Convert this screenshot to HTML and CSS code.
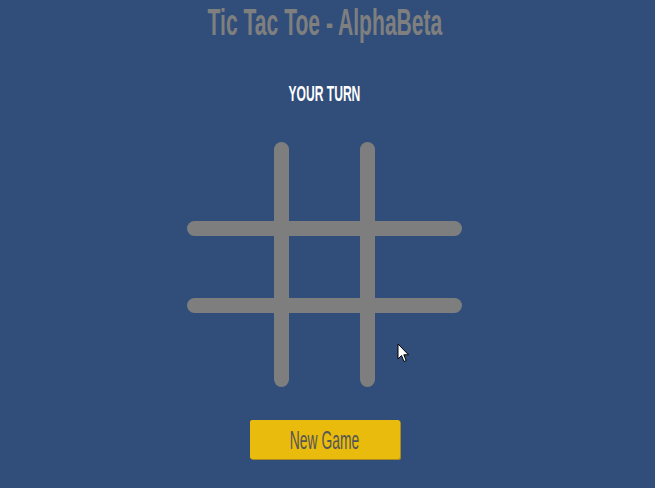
FILE: index.html
```html
<!DOCTYPE html>
<html>
<head>
<meta charset="utf-8">
<link rel="stylesheet" href="styles.css">
</head>
<body>
<div class="app">
  <h1 class="title">Tic Tac Toe - AlphaBeta</h1>
  <div class="status">YOUR TURN</div>
  <div class="board">
    <div class="line vline v1"></div>
    <div class="line vline v2"></div>
    <div class="line hline h1"></div>
    <div class="line hline h2"></div>
  </div>
  <button class="new-game"><span class="label">New Game</span></button>
</div>
<svg class="cursor" width="14" height="22" viewBox="0 0 14 22">
  <path d="M1 1 L1 16 L4.5 12.5 L7 18.5 L9.2 17.6 L6.8 11.8 L11.5 11.8 Z" fill="#fff" stroke="#000" stroke-width="1" stroke-linejoin="miter"/>
</svg>
</body>
</html>
```
FILE: styles.css
```css
html, body {
  margin: 0;
  padding: 0;
  width: 655px;
  height: 488px;
  overflow: hidden;
  background: #314e7a;
}
.app {
  display: flex;
  flex-direction: column;
  align-items: center;
  padding-top: 3px;
  padding-right: 6px;
}
.title {
  margin: 0;
  font-family: "Liberation Sans", Arial, sans-serif;
  font-weight: bold;
  font-size: 37px;
  line-height: 40px;
  color: #7f7f7f;
  white-space: nowrap;
  transform: scaleX(0.57);
}
.status {
  margin-top: 38px;
  font-family: "Liberation Sans", Arial, sans-serif;
  font-weight: bold;
  font-size: 22px;
  line-height: 26px;
  color: #ffffff;
  white-space: nowrap;
  transform: scaleX(0.55);
}
.board {
  margin-top: 35px;
  display: grid;
  grid-template-columns: 87px 15px 71px 15px 87px;
  grid-template-rows: 79px 15px 62px 15px 74px;
}
.line {
  background: #7e7e7e;
  border-radius: 8px;
}
.vline { grid-row: 1 / -1; }
.v1 { grid-column: 2; }
.v2 { grid-column: 4; }
.hline { grid-column: 1 / -1; }
.h1 { grid-row: 2; }
.h2 { grid-row: 4; }
.new-game {
  margin-top: 33px;
  width: 150px;
  height: 39px;
  border: none;
  border-radius: 2px;
  background: #e8bb0d;
  box-shadow: 1px 1px 0 #a88a20;
  padding: 0;
  display: flex;
  align-items: center;
  justify-content: center;
}
.label {
  display: inline-block;
  font-family: "Liberation Sans", Arial, sans-serif;
  font-size: 25px;
  line-height: 30px;
  color: #555555;
  white-space: nowrap;
  transform: scaleX(0.555);
}
.cursor {
  position: absolute;
  left: 397px;
  top: 343px;
}
```
